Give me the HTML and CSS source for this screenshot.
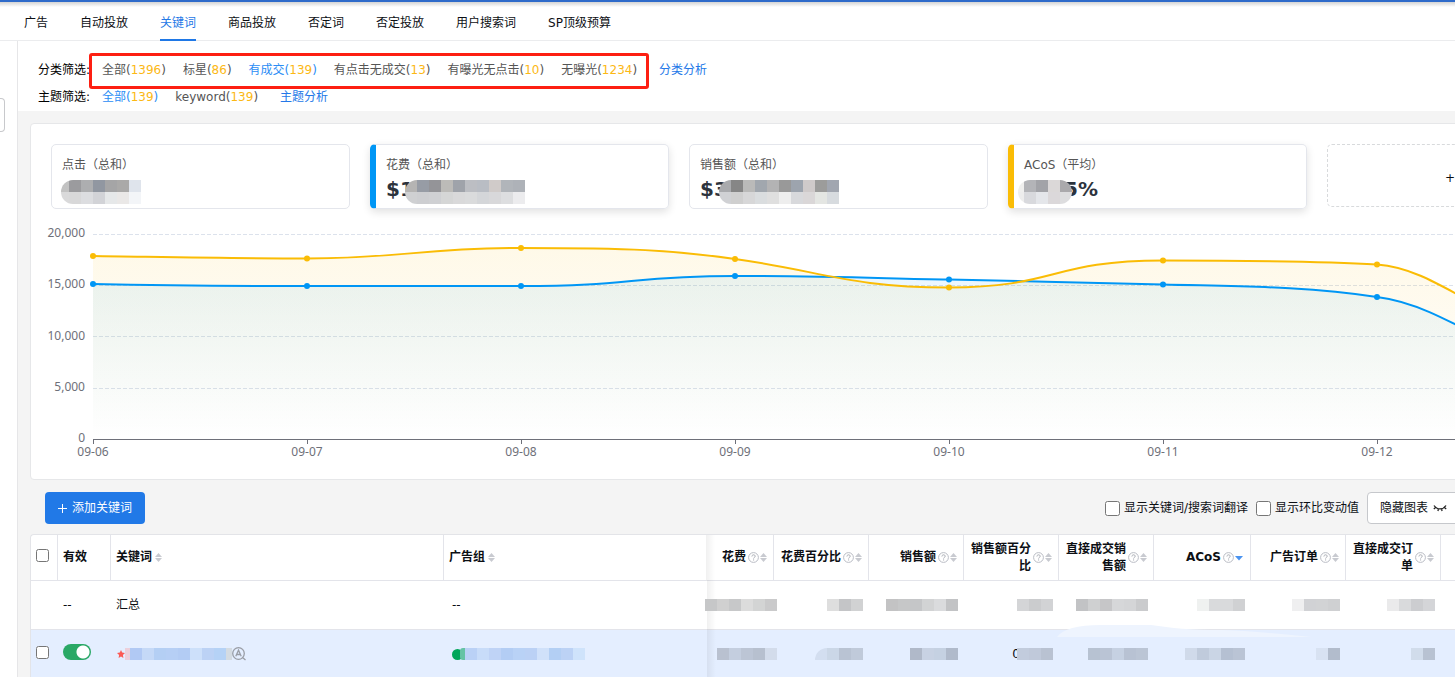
FILE: index.html
```html
<!DOCTYPE html>
<html lang="zh-CN">
<head>
<meta charset="utf-8">
<title>关键词</title>
<link rel="stylesheet" href="styles.css">
</head>
<body>
<svg class="defs" aria-hidden="true">
  <symbol id="help" viewBox="0 0 11 11"><circle cx="5.5" cy="5.5" r="4.9" fill="none" stroke="#b9bcc4"/><path d="M3.9 4.5c0-2.2 3.3-2.2 3.3-.2 0 1.1-1.6 1.1-1.6 2.2M5.6 7.4v1.1" fill="none" stroke="#a9acb4"/></symbol>
  <symbol id="sort" viewBox="0 0 7 9"><path d="M3.5 0 7 4H0zM3.5 9 7 5H0z" fill="#c8cad0"/></symbol>
  <symbol id="sort-down" viewBox="0 0 9 9"><path d="M0 3h8L4 7.500z" fill="#4a93f0"/></symbol>
</svg>
<div class="app">
  <nav class="tabs">
    <a href="#">广告</a><a href="#">自动投放</a><a href="#" class="active">关键词</a><a href="#">商品投放</a><a href="#">否定词</a><a href="#">否定投放</a><a href="#">用户搜索词</a><a href="#">SP顶级预算</a>
  </nav>
  <div class="body">
    <aside class="gutter"><button class="handle" aria-label="展开"></button></aside>
    <main class="main">
      <section class="filters">
        <div class="filter-row">
          <span class="filter-label">分类筛选:</span>
          <div class="filter-group marked">
            <a href="#">全部(<b>1396</b>)</a><a href="#">标星(<b>86</b>)</a><a href="#" class="on">有成交(<b>139</b>)</a><a href="#">有点击无成交(<b>13</b>)</a><a href="#">有曝光无点击(<b>10</b>)</a><a href="#">无曝光(<b>1234</b>)</a>
          </div>
          <a href="#" class="analysis">分类分析</a>
        </div>
        <div class="filter-row">
          <span class="filter-label">主题筛选:</span>
          <div class="filter-group">
            <a href="#" class="on">全部(<b>139</b>)</a><a href="#">keyword(<b>139</b>)</a>
          </div>
          <a href="#" class="analysis">主题分析</a>
        </div>
      </section>

      <section class="panel">
        <div class="stats">
          <div class="stat"><div class="stat-label">点击（总和）</div><div class="stat-value"><span class="mosaic big first" data-rows="c2c2c2,9b9b9e,adaeb0,9197a1,a5a5a6,aaa9a8,dfe4ec|d9d9da,d8d8d9,dcdde0,d2d3d7,e6e8e9,eae8e7,f3f5f8"></span></div></div>
          <div class="stat picked blue"><div class="stat-label">花费（总和）</div><div class="stat-value"><span>$1</span><span class="mosaic big over" data-rows="b5b4b3,979ca5,949498,bcbbb8,9fa3aa,bcbec3,b9bdc4,d0cbc9,b1b5ba,aeb2b8|cfd0d2,cdced1,cfd0d3,d5d6d6,d9d9da,dadbdc,d4d6d9,d8d8da,dddee0,ececee"></span></div></div>
          <div class="stat"><div class="stat-label">销售额（总和）</div><div class="stat-value"><span>$3</span><span class="mosaic big over" data-rows="a9aaad,868686,babab9,a1a7ae,b3b3b4,999999,9da4ae,cfcaca,9c9c9b,a1a6b0|d0d1d4,cfcfcf,d7d7d8,dadddf,dfdfdf,eeeeee,d8d9dc,dad7d8,e4e6e3,d7dbdf"></span></div></div>
          <div class="stat picked amber"><div class="stat-label">ACoS（平均）</div><div class="stat-value"><span class="mosaic big round under" data-rows="efefee,b3b4b8,a2a3a8,dbd8d8,aaa9ac|ededed,d8d9dd,e4e6ea,dbd8da,dddddf"></span><span class="tail">5%</span></div></div>
          <button class="stat add">+</button>
        </div>
        <svg class="chart" role="img" aria-label="花费与ACoS趋势">
          <defs>
            <linearGradient id="gb" x1="0" y1="0" x2="0" y2="1"><stop offset="0" stop-color="#0096f5" stop-opacity=".08"/><stop offset="1" stop-color="#0096f5" stop-opacity="0"/></linearGradient>
            <linearGradient id="gy" x1="0" y1="0" x2="0" y2="1"><stop offset="0" stop-color="#fabc05" stop-opacity=".09"/><stop offset=".25" stop-color="#fabc05" stop-opacity=".07"/><stop offset="1" stop-color="#fabc05" stop-opacity="0"/></linearGradient>
          </defs>
          <g class="grid"><path d="M62 15.500H1500M62 66.500H1500M62 117.500H1500M62 169.500H1500"/></g>
          <path fill="url(#gy)" d="M62 37C133 38 204 39.500 276 39.500C370 39.500 390 29 490 29C600 29 640 31 704 40C790 52 820 68.500 918 68.500C1025 68.500 1020 41.500 1132 41.500C1230 41.500 1290 42 1346 45.500C1395 49 1425 80 1560 145V220H62Z"/>
          <path fill="url(#gb)" d="M62 65C133 66.500 204 67 276 67H490C600 67 600 57 704 57C790 57 840 59 918 60.500C990 62 1060 64 1132 65.500C1210 67.500 1275 67 1346 78C1395 84 1430 110 1560 175V220H62Z"/>
          <path class="line blue-line" d="M62 65C133 66.500 204 67 276 67H490C600 67 600 57 704 57C790 57 840 59 918 60.500C990 62 1060 64 1132 65.500C1210 67.500 1275 67 1346 78C1395 84 1430 110 1560 175"/>
          <path class="line amber-line" d="M62 37C133 38 204 39.500 276 39.500C370 39.500 390 29 490 29C600 29 640 31 704 40C790 52 820 68.500 918 68.500C1025 68.500 1020 41.500 1132 41.500C1230 41.500 1290 42 1346 45.500C1395 49 1425 80 1560 145"/>
          <g fill="#0096f5"><circle cx="62" cy="65" r="3"/><circle cx="276" cy="67" r="3"/><circle cx="490" cy="67" r="3"/><circle cx="704" cy="57" r="3"/><circle cx="918" cy="60.500" r="3"/><circle cx="1132" cy="65.500" r="3"/><circle cx="1346" cy="78" r="3"/></g>
          <g fill="#fabc05"><circle cx="62" cy="37" r="3"/><circle cx="276" cy="39.500" r="3"/><circle cx="490" cy="29" r="3"/><circle cx="704" cy="40" r="3"/><circle cx="918" cy="68.500" r="3"/><circle cx="1132" cy="41.500" r="3"/><circle cx="1346" cy="45.500" r="3"/></g>
          <path class="axis" d="M62 220.500H1500M62.500 220v5M276.500 220v5M490.500 220v5M704.500 220v5M918.500 220v5M1132.500 220v5M1346.500 220v5"/>
          <g class="ylab"><text x="54" y="18">20,000</text><text x="54" y="69">15,000</text><text x="54" y="121">10,000</text><text x="54" y="172">5,000</text><text x="54" y="223">0</text></g>
          <g class="xlab"><text x="62" y="237">09-06</text><text x="276" y="237">09-07</text><text x="490" y="237">09-08</text><text x="704" y="237">09-09</text><text x="918" y="237">09-10</text><text x="1132" y="237">09-11</text><text x="1346" y="237">09-12</text></g>
        </svg>
      </section>

      <div class="toolbar">
        <button class="primary"><svg width="9" height="9" viewBox="0 0 9 9"><path d="M0 4.500h9M4.500 0v9" stroke="#fff"/></svg>添加关键词</button>
        <div class="tools">
          <label><input type="checkbox">显示关键词/搜索词翻译</label>
          <label><input type="checkbox">显示环比变动值</label>
          <button class="plain">隐藏图表<svg width="14" height="8" viewBox="0 0 14 8"><path d="M1 1.500c3 4.500 9 4.500 12 0M2.500 3.500.8 5M5.500 5l-.6 2M8.500 5l.6 2M11.500 3.500 13.200 5" fill="none" stroke="#222" stroke-width="1.300"/></svg></button>
        </div>
      </div>

      <div class="table-wrap">
      <table>
        <colgroup><col class="c-check"><col class="c-on"><col class="c-key"><col class="c-group"><col class="c-cost"><col class="c-num"><col class="c-num"><col class="c-num"><col class="c-num"><col class="c-acos"><col class="c-num"><col class="c-num"><col></colgroup>
        <thead><tr>
          <th class="pick"><input type="checkbox" aria-label="全选"></th>
          <th>有效</th>
          <th><div class="head">关键词<svg class="sort"><use href="#sort"/></svg></div></th>
          <th class="edge"><div class="head">广告组<svg class="sort"><use href="#sort"/></svg></div></th>
          <th><div class="head num"><span>花费</span><svg class="help"><use href="#help"/></svg><svg class="sort"><use href="#sort"/></svg></div></th>
          <th><div class="head num"><span>花费百分比</span><svg class="help"><use href="#help"/></svg><svg class="sort"><use href="#sort"/></svg></div></th>
          <th><div class="head num"><span>销售额</span><svg class="help"><use href="#help"/></svg><svg class="sort"><use href="#sort"/></svg></div></th>
          <th><div class="head num"><span>销售额百分比</span><svg class="help"><use href="#help"/></svg><svg class="sort"><use href="#sort"/></svg></div></th>
          <th><div class="head num"><span>直接成交销售额</span><svg class="help"><use href="#help"/></svg><svg class="sort"><use href="#sort"/></svg></div></th>
          <th><div class="head num"><span>ACoS</span><svg class="help"><use href="#help"/></svg><svg class="sort down"><use href="#sort-down"/></svg></div></th>
          <th><div class="head num"><span>广告订单</span><svg class="help"><use href="#help"/></svg><svg class="sort"><use href="#sort"/></svg></div></th>
          <th><div class="head num"><span>直接成交订单</span><svg class="help"><use href="#help"/></svg><svg class="sort"><use href="#sort"/></svg></div></th>
          <th class="last"></th>
        </tr></thead>
        <tbody>
          <tr>
            <td></td><td>--</td><td>汇总</td><td class="edge group">--</td>
            <td><div class="num spill"><span class="mosaic" data-rows="c6c7c8,d0d0d0,c7c8c9,dcdcdc,d3d4d4,cacacb"></span></div></td>
            <td><div class="num"><span class="mosaic" data-rows="dedede,c4c5c7,d1d2d3"></span></div></td>
            <td><div class="num"><span class="mosaic" data-rows="c3c3c4,c6c7c8,c5c6c8,d2d3d4,dadbdd,c2c3c5"></span></div></td>
            <td><div class="num"><span class="mosaic" data-rows="d4d5d7,cbccce,d2d3d5"></span></div></td>
            <td><div class="num"><span class="mosaic" data-rows="c2c3c5,cfd0d1,c6c6c8,d6d7d9,d4d5d7,cacbcd"></span></div></td>
            <td><div class="num"><span class="mosaic" data-rows="eff1f0,d9dadc,d9dadc,d0d1d3"></span></div></td>
            <td><div class="num"><span class="mosaic" data-rows="efeff0,d1d2d5,d2d3d5,cfd0d2"></span></div></td>
            <td><div class="num"><span class="mosaic" data-rows="eaeaeb,d9dadc,cccdd0,d4d5d8"></span></div></td>
            <td></td>
          </tr>
          <tr class="current">
            <td class="pick"><input type="checkbox" aria-label="选择"></td>
            <td class="state"><input type="checkbox" class="switch" role="switch" aria-label="有效" checked></td>
            <td><div class="word"><svg class="star" viewBox="0 0 10 10"><path d="m5 0 1.500 3.200L10 3.700 7.400 6.200 8 10 5 8.200 2 10l.6-3.800L0 3.700l3.500-.5z" fill="#fb5a55"/></svg><span class="mosaic fringe" data-rows="b1c9f4,c5d9f7,b4cff4,b6cff5,b3ccf4,cde0fa,bcd2f5,b5d2f6"></span><svg class="query" viewBox="0 0 14 14"><circle cx="6.500" cy="6.500" r="5.800"/><path d="m3.800 9.200 2.700-6 2.700 6M4.700 7.500h3.600M10.500 10.500l3 2.500"/></svg></div></td>
            <td class="edge group"><div class="word"><span class="dot"></span><span class="mosaic tint" data-rows="bad1f6,c8dcf9,bfd3f6,b3cdf4,b9d2f6,bbd1f5,d0e1fa,b3cff4,bcd2f5,cfe3fb"></span></div></td>
            <td><div class="num spill"><span class="mosaic" data-rows="b9c1d0,c4cedf,bcc5d5,b7c0cf,d3dceb"></span></div></td>
            <td><div class="num"><span class="mosaic soft" data-rows="d3def0,cbd7e7,b9c3d3,c0cada"></span></div></td>
            <td><div class="num"><span class="mosaic" data-rows="b0b9c9,c8d2e3,c5d1e2,b0bacb"></span></div></td>
            <td><div class="num">0<span class="mosaic cover" data-rows="c2ccdd,c0c9da,b9c2d2"></span></div></td>
            <td><div class="num"><span class="mosaic" data-rows="b7c2d2,bac4d5,c6d1e2,b8c2d3,bbc5d5"></span></div></td>
            <td><div class="num"><span class="mosaic" data-rows="d0daea,c0cbdc,cad5e5,b5c0d2,bac4d5"></span></div></td>
            <td><div class="num"><span class="mosaic" data-rows="d8e2f2,b2bccc"></span></div></td>
            <td><div class="num"><span class="mosaic" data-rows="d1dceb,b8c2d2"></span></div></td>
            <td></td>
          </tr>
        </tbody>
      </table>
      <svg class="smudge" viewBox="0 0 270 12"><path d="M0 12C6 4 20 0 44 0h50c20 3 40 5 70 5 36 1 66 5 90 7z" fill="#eef4fe"/></svg>
      </div>
    </main>
  </div>
</div>
<script src="mosaic.js"></script>
</body>
</html>
```

FILE: mosaic.js
```js
// Fills each masked value with its rows of coloured cells.
document.querySelectorAll('.mosaic').forEach(function (box) {
  box.dataset.rows.split('|').forEach(function (row) {
    var line = document.createElement('span');
    line.className = 'mosaic-row';
    row.split(',').forEach(function (colour) {
      var cell = document.createElement('i');
      cell.style.background = '#' + colour;
      line.appendChild(cell);
    });
    box.appendChild(line);
  });
});
```

FILE: styles.css
```css
* { box-sizing: border-box; }
body {
  margin: 0;
  font: 12px/18px "DejaVu Sans", "Noto Sans CJK SC", sans-serif;
  color: #0c0f14;
  background: #fff;
}
a { color: inherit; text-decoration: none; }
button { font: inherit; color: inherit; }
input { margin: 0; }
.defs { position: absolute; width: 0; height: 0; }

.app { display: flex; flex-direction: column; height: 100vh; overflow: hidden; }
.tabs {
  display: flex;
  flex: none;
  gap: 32px;
  height: 41px;
  padding-left: 24px;
  border-top: 2px solid #2f6bca;
  border-bottom: 1px solid #ebecee;
  background: linear-gradient(#d4d4d4, #fff 5px);
}
.tabs a { height: 39px; line-height: 42px; white-space: nowrap; }
.tabs .active { color: #1f78e6; border-bottom: 2px solid #1f78e6; }

.body { display: flex; flex: 1; min-height: 0; }
.gutter { flex: none; width: 18px; border-right: 1px solid #e6e6e8; }
.handle {
  display: block;
  width: 5px;
  height: 34px;
  margin-top: 57px;
  padding: 0;
  border: 1px solid #c8c9cc;
  border-left: 0;
  border-radius: 0 4px 4px 0;
  background: #fff;
}
.main { flex: 1; min-width: 0; overflow: hidden; background: #f4f4f4; }

.filters { height: 70px; padding: 16px 0 0 20px; background: #fff; }
.filter-row { display: flex; height: 27px; line-height: 27px; white-space: nowrap; }
.filter-label { width: 52px; margin-right: 12px; color: #000; }
.filter-group { display: flex; gap: 17px; color: #555; }
.filter-group b { font-weight: normal; color: #fcb814; }
.filter-group .on { color: #2b8df5; }
.analysis { margin-left: 22px; color: #2478e8; }
.marked { position: relative; }
.marked::after {
  content: "";
  position: absolute;
  inset: -4px -12px -5px -13px;
  border: 3px solid #fd1f12;
  border-radius: 3px;
  pointer-events: none;
}

.panel {
  height: 357px;
  margin: 12px -8px 0 12px;
  padding: 20px 0 0 20px;
  border: 1px solid #e6e7e9;
  border-radius: 4px;
  background: #fff;
}
.stats { display: flex; gap: 20px; height: 65px; }
.stat {
  flex: 0 0 299px;
  padding: 10px 10px 0;
  border: 1px solid #e4e6ec;
  border-radius: 5px;
}
.stat-label { color: #555; line-height: 20px; }
.stat-value { display: flex; height: 24px; font-size: 20px; font-weight: bold; line-height: 28px; color: #2c333d; }
.picked { box-shadow: 0 3px 8px rgba(0, 0, 0, .12); }
.blue { border-left: 6px solid #0096f5; }
.amber { border-left: 6px solid #fabc05; }
.add { height: 63px; padding: 5px 0 0 117px; border-style: dashed; border-color: #d8dadc; background: #fff; text-align: left; }

.mosaic { display: block; position: relative; }
.mosaic-row { display: flex; justify-content: flex-end; }
.mosaic i { flex: none; width: 12px; height: 12px; }
.big { align-self: flex-start; margin-top: 5px; overflow: hidden; border-radius: 12px 0 0 12px; }
.first { width: 80px; margin-left: -1px; }
.over { margin-left: -9px; }
.under { z-index: 1; width: 54px; margin-left: -6px; }
.round { border-radius: 12px; }
.tail { margin-left: -8px; }

.chart { display: block; width: calc(100% + 20px); height: 245px; margin: 10px 0 0 -20px; }
.grid { stroke: #dce2ec; stroke-dasharray: 4 2; }
.line { fill: none; stroke-width: 2; }
.blue-line { stroke: #0096f5; }
.amber-line { stroke: #fabc05; }
.axis { fill: none; stroke: #6e7079; }
.ylab, .xlab { font: 12px "Noto Sans", sans-serif; fill: #6e7079; }
.ylab { text-anchor: end; }
.xlab { text-anchor: middle; }

.toolbar { display: flex; justify-content: space-between; margin: 0 -8px 0 27px; padding: 12px 0 10px; }
.toolbar button { display: flex; align-items: center; height: 32px; border-radius: 4px; white-space: nowrap; }
.primary { gap: 5px; padding: 0 13px; border: 0; background: #2179e7; color: #fff; }
.plain { gap: 5px; padding: 0 15px 0 12px; border: 1px solid #c6c8cc; background: #fff; }
.tools { display: flex; align-items: center; gap: 8px; white-space: nowrap; }
.tools label { display: flex; align-items: center; gap: 4px; }
.tools input { width: 15px; height: 15px; }

.table-wrap { position: relative; margin-left: 12px; border: 1px solid #e3e4e8; border-right: 0; border-radius: 4px 0 0 0; background: #fff; }
table { width: 100%; table-layout: fixed; border-collapse: separate; border-spacing: 0; }
.c-check { width: 27px; }
.c-on { width: 53px; }
.c-key { width: 333px; }
.c-group { width: 263px; }
.c-cost { width: 67px; }
.c-num { width: 95px; }
.c-acos { width: 97px; }
th, td { padding: 0 6px 0 5px; text-align: left; border-bottom: 1px solid #e3e4ea; }
th { height: 46px; line-height: 17px; border-right: 1px solid #e3e4ea; white-space: nowrap; }
td { height: 49px; }
th.edge { border-right-color: #fff; }
th.last { border-right: 0; }
.edge { position: relative; }
.edge::after { content: ""; position: absolute; top: 0; bottom: -1px; right: -9px; width: 9px; background: linear-gradient(90deg, rgba(0, 0, 0, .06), transparent); }
td.group { padding-left: 8px; }
.pick, .state { padding-bottom: 4px; }
.pick input { display: block; width: 13px; height: 13px; }
.head { display: flex; align-items: center; gap: 3px; }
.head.num { gap: 1px; white-space: normal; }
.head.num span { max-width: 61px; text-align: right; }
.help { flex: none; width: 11px; height: 11px; margin-left: 1px; }
.sort { flex: none; width: 7px; height: 9px; }
.down { width: 9px; }
.num { display: flex; justify-content: flex-end; }
.spill { margin-right: -9px; }
td .num { align-items: center; line-height: 12px; }
.cover { margin-left: -3px; }
.soft { overflow: hidden; border-radius: 12px 0 0 0; }
.current { background: #e4eeff; }
.word { display: flex; align-items: center; }
.star { flex: none; width: 8px; height: 8px; margin-left: 1px; }
.fringe { padding: 0 6px 0 5px; background: linear-gradient(90deg, #ecd0dc 5px, #d4dbe2 5px); }
.query { width: 14px; height: 14px; fill: none; stroke: #999da6; stroke-width: 1.3; }
.dot { width: 11px; height: 11px; border-radius: 50%; background: #00a65a; }
.tint { margin-left: -3px; padding-left: 5px; background: #65c3a5; border-radius: 3px 0 0 3px; }
.switch { display: block; appearance: none; width: 28px; height: 16px; border-radius: 8px; background: radial-gradient(circle at 20px 8px, #fff 6px, transparent 7px) #2aa866; }
.smudge { position: absolute; top: 90px; left: 1026px; width: 270px; height: 12px; pointer-events: none; }
```
